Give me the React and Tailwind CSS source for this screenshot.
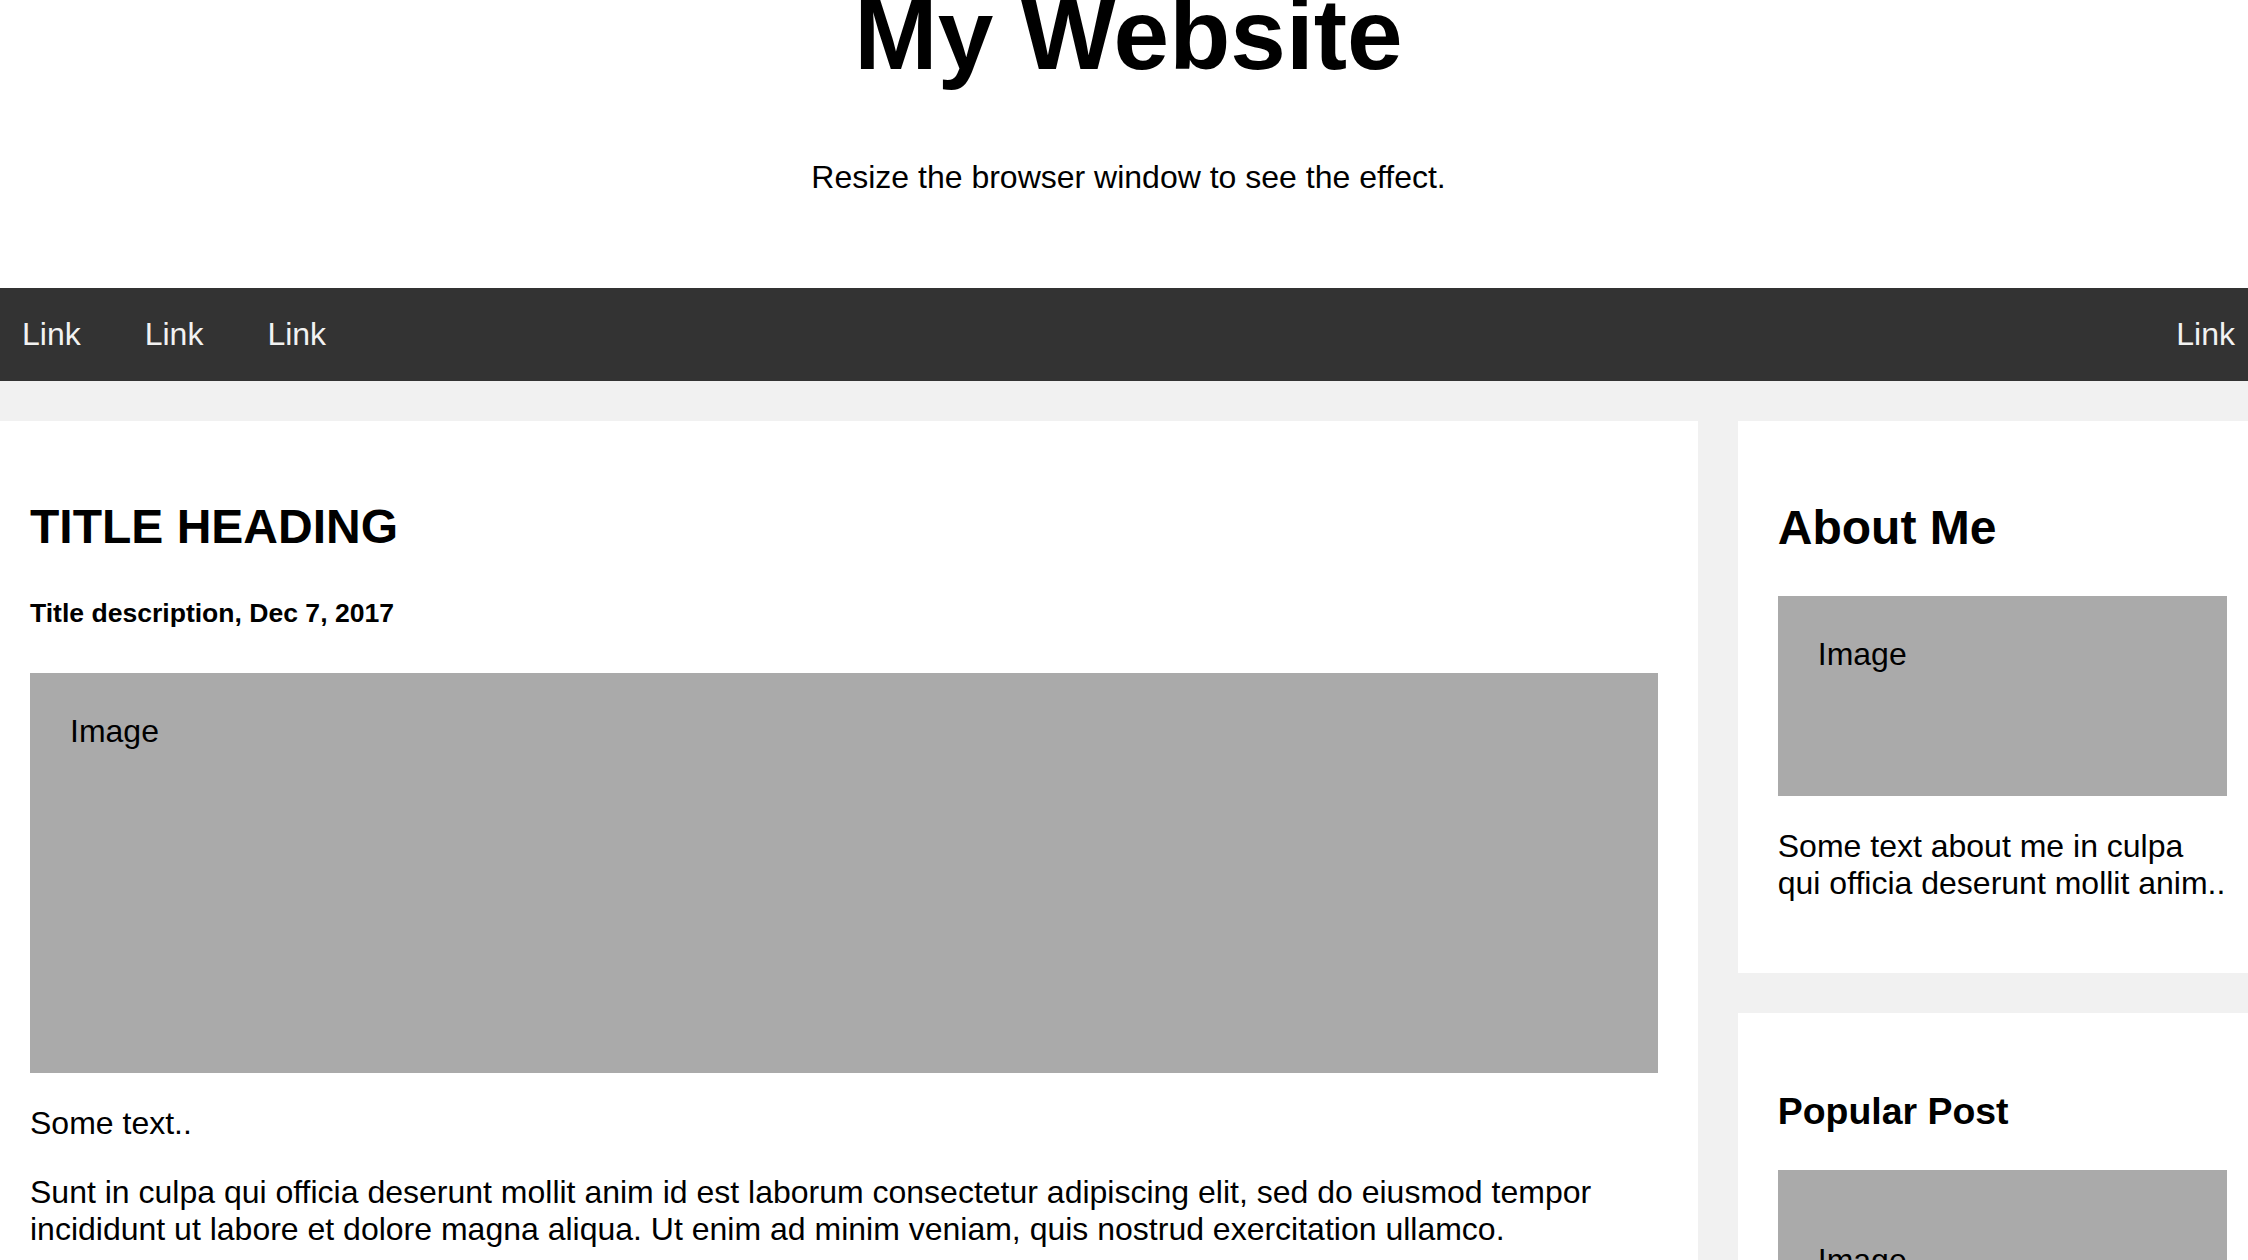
import React from "react";

const FakeImg = ({ tall, children }) => (
  <div
    className={`bg-[#aaaaaa] p-[40px] ${tall ? "h-[400px]" : "h-[200px]"} text-[32px] leading-[normal]`}
  >
    {children || "Image"}
  </div>
);

const App = () => {
  const links = ["Link", "Link", "Link"];

  return (
    <div className="min-h-screen w-full overflow-hidden bg-[#f1f1f1] font-['Liberation_Sans',Arial,sans-serif] text-black">
      <div className="w-[2277px] -ml-[10px]">
        {/* Header */}
        <div className="bg-white text-center pb-[60px]">
          <h1 className="-mt-[23px] mb-[67px] text-[100px] font-bold leading-[normal]">
            My Website
          </h1>
          <p className="mb-[32px] text-[32px] leading-[normal]">
            Resize the browser window to see the effect.
          </p>
        </div>

        {/* Top navigation */}
        <div className="flex bg-[#333333]">
          {links.map((label, i) => (
            <a
              key={i}
              href="#"
              className="block px-[32px] py-[28px] text-[32px] leading-[normal] text-[#f2f2f2]"
            >
              {label}
            </a>
          ))}
          <a
            href="#"
            className="ml-auto block px-[32px] py-[28px] text-[32px] leading-[normal] text-[#f2f2f2]"
          >
            Link
          </a>
        </div>

        {/* Content */}
        <div className="flex items-start">
          <div className="w-[75%]">
            <div className="mt-[40px] bg-white p-[40px]">
              <h2 className="mt-[38px] mb-[39.84px] text-[48px] font-bold leading-[normal]">
                TITLE HEADING
              </h2>
              <h5 className="mt-[44.4px] mb-[44px] text-[26.56px] font-bold leading-[normal]">
                Title description, Dec 7, 2017
              </h5>
              <FakeImg tall />
              <p className="my-[32px] text-[32px] leading-[normal]">Some text..</p>
              <p className="my-[32px] text-[32px] leading-[normal]">
                Sunt in culpa qui officia deserunt mollit anim id est laborum
                consectetur adipiscing elit, sed do eiusmod tempor incididunt ut
                labore et dolore magna aliqua. Ut enim ad minim veniam, quis
                nostrud exercitation ullamco.
              </p>
            </div>
          </div>

          <div className="w-[25%] pl-[40px]">
            <div className="mt-[40px] bg-white p-[40px]">
              <h2 className="mt-[38.5px] mb-[41px] text-[48px] font-bold leading-[normal]">
                About Me
              </h2>
              <FakeImg />
              <p className="mt-[32px] mb-[31px] text-[32px] leading-[normal]">
                Some text about me in culpa qui officia deserunt mollit anim..
              </p>
            </div>
            <div className="mt-[40px] bg-white p-[40px]">
              <h3 className="my-[37.44px] text-[37.44px] font-bold leading-[normal]">
                Popular Post
              </h3>
              <div className="bg-[#aaaaaa] p-[40px] text-[32px] leading-[normal]">
                <p className="my-[32px]">Image</p>
              </div>
              <div className="mt-[40px] bg-[#aaaaaa] p-[40px] text-[32px] leading-[normal]">
                <p className="my-[32px]">Image</p>
              </div>
            </div>
          </div>
        </div>
      </div>
    </div>
  );
};

export default App;
